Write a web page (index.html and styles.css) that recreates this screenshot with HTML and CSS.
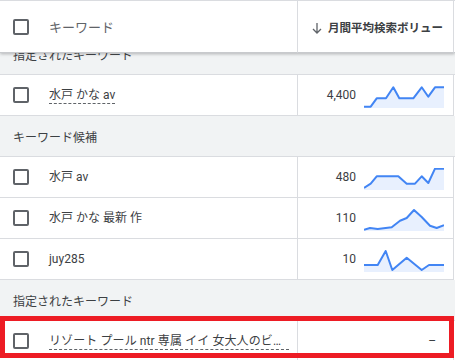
FILE: index.html
```html
<!DOCTYPE html>
<html lang="ja">
<head>
  <meta charset="UTF-8"/>
  <meta name="viewport" content="width=device-width, initial-scale=1.0"/>
  <title>キーワード</title>
  <link rel="stylesheet" href="styles.css">
</head>
<body>
  <div class="table">
    <div class="row head">
      <div class="cell kw"><span class="cb"></span><span class="head-label">キーワード</span></div>
      <div class="cell vol">
        <svg class="arrow" width="10" height="12" viewBox="0 0 10 12">
          <path d="M5 1v10M1 7l4 4 4-4" fill="none" stroke="#5f6368" stroke-width="1.3"/>
        </svg>
        <span class="head-title">月間平均検索ボリュー</span>
      </div>
      <div class="cell rest"></div>
    </div>

    <div class="body">
      <div class="group">指定されたキーワード</div>
      <div class="row">
        <div class="cell kw"><span class="cb"></span><span class="term dashed">水戸 かな av</span></div>
        <div class="cell vol">
          <span class="num">4,400</span>
          <svg class="spark" width="80" height="22" viewBox="0 0 80 22">
            <polygon class="area" points="0,20.7 6.7,20.7 12.7,12.3 22,12.3 29.3,1.3 35.3,12.3 49.3,12.3 57.7,1.3 64.3,10.7 71,1.3 80,1.3 80,22 0,22"/>
            <polyline class="line" points="0,20.7 6.7,20.7 12.7,12.3 22,12.3 29.3,1.3 35.3,12.3 49.3,12.3 57.7,1.3 64.3,10.7 71,1.3 80,1.3"/>
          </svg>
        </div>
        <div class="cell rest"></div>
      </div>

      <div class="group">キーワード候補</div>
      <div class="row">
        <div class="cell kw"><span class="cb"></span><span class="term">水戸 av</span></div>
        <div class="cell vol">
          <span class="num">480</span>
          <svg class="spark" width="80" height="22" viewBox="0 0 80 22">
            <polygon class="area" points="0,20 6.7,15.7 12.7,8.3 34.3,8.3 42.7,15.7 51,15.7 57.7,8.3 64.3,15 71,0.7 80,0.7 80,22 0,22"/>
            <polyline class="line" points="0,20 6.7,15.7 12.7,8.3 34.3,8.3 42.7,15.7 51,15.7 57.7,8.3 64.3,15 71,0.7 80,0.7"/>
          </svg>
        </div>
        <div class="cell rest"></div>
      </div>
      <div class="row">
        <div class="cell kw"><span class="cb"></span><span class="term">水戸 かな 最新 作</span></div>
        <div class="cell vol">
          <span class="num">110</span>
          <svg class="spark" width="80" height="22" viewBox="0 0 80 22">
            <polygon class="area" points="0,20.7 6,19 13.7,20 27.7,18.3 36,11.7 42.7,9 50,1 57.7,8 66,16.7 72.7,19 80,16.3 80,22 0,22"/>
            <polyline class="line" points="0,20.7 6,19 13.7,20 27.7,18.3 36,11.7 42.7,9 50,1 57.7,8 66,16.7 72.7,19 80,16.3"/>
          </svg>
        </div>
        <div class="cell rest"></div>
      </div>
      <div class="row">
        <div class="cell kw"><span class="cb"></span><span class="term">juy285</span></div>
        <div class="cell vol">
          <span class="num">10</span>
          <svg class="spark" width="80" height="22" viewBox="0 0 80 22">
            <polygon class="area" points="0,15 13.7,15 21.7,1 28.3,20 42.7,7.7 57.7,20 65,15 80,15 80,22 0,22"/>
            <polyline class="line" points="0,15 13.7,15 21.7,1 28.3,20 42.7,7.7 57.7,20 65,15 80,15"/>
          </svg>
        </div>
        <div class="cell rest"></div>
      </div>

      <div class="group">指定されたキーワード</div>
      <div class="row">
        <div class="cell kw"><span class="cb"></span><span class="term dashed long">リゾート プール ntr 専属 イイ 女大人のビキニ</span></div>
        <div class="cell vol"><span class="none">–</span></div>
        <div class="cell rest"></div>
      </div>
    </div>

    <div class="highlight"></div>
  </div>
</body>
</html>
```

FILE: styles.css
```css
body {
  margin: 0;
  background: #fff;
  font-family: Roboto, "Noto Sans CJK JP", sans-serif;
  font-size: 12px;
  color: #3c4043;
}

.table {
  position: relative;
  width: 455px;
  height: 360px;
  overflow: hidden;
}

.row {
  display: grid;
  grid-template-columns: 298px 156px 1fr;
  height: 41px;
  background: #fff;
}

.cell {
  display: flex;
  align-items: center;
  border-bottom: 1px solid #dadce0;
  min-width: 0;
}

.kw,
.vol {
  border-right: 1px solid #dadce0;
}

.rest {
  border-bottom: none;
}

.head {
  position: relative;
  z-index: 2;
  height: 53px;
  border-top: 1px solid #dadce0;
  box-sizing: border-box;
  box-shadow: 0 1px 3px rgba(60, 64, 67, 0.35);
}

.head .cell {
  border-bottom: 1px solid #c8cacd;
}

.cb {
  flex: none;
  width: 12px;
  height: 12px;
  border: 2px solid #5f6368;
  border-radius: 2px;
  margin: 0 20px 0 13px;
}

.head-label {
  font-size: 13px;
  color: #5f6368;
}

.head .vol {
  justify-content: flex-end;
  padding-right: 10px;
}

.arrow {
  flex: none;
  margin-right: 6px;
  margin-top: 2px;
}

.head-title {
  font-weight: bold;
  font-size: 11.5px;
  color: #3c4043;
  white-space: nowrap;
}

.body {
  margin-top: -19px;
}

.group {
  height: 41px;
  box-sizing: border-box;
  display: flex;
  align-items: center;
  padding-left: 13px;
  background: #f1f3f4;
  border-bottom: 1px solid #dadce0;
}

.term {
  white-space: nowrap;
  line-height: 16px;
}

.dashed {
  border-bottom: 1px dashed #5f6368;
}

.long {
  max-width: 240px;
  overflow: hidden;
  text-overflow: ellipsis;
  letter-spacing: 0.1px;
}

.vol {
  justify-content: flex-end;
  padding-right: 9px;
}

.num {
  margin-right: 8px;
}

.spark {
  display: block;
  margin-top: 3px;
}

.area {
  fill: #e8f0fe;
}

.line {
  fill: none;
  stroke: #4285f4;
  stroke-width: 2;
  stroke-linejoin: round;
}

.none {
  padding-right: 8px;
  color: #3c4043;
}

.highlight {
  position: absolute;
  left: 0;
  top: 316px;
  width: 454px;
  height: 42px;
  box-sizing: border-box;
  border: 5px solid #ed1c24;
  z-index: 3;
}
```
